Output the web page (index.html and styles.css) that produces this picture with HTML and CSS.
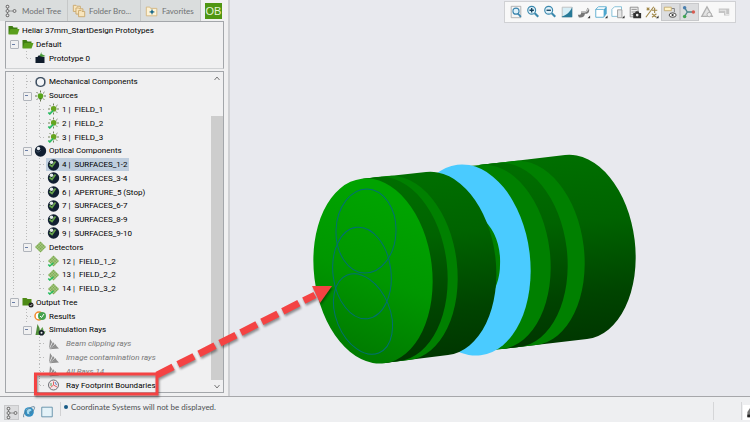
FILE: index.html
```
<!DOCTYPE html>
<html lang="en">
<head>
  <meta charset="UTF-8">
  <meta name="viewport" content="width=device-width, initial-scale=1">
  <title>Heliar 37mm_StartDesign Prototypes</title>
  <link rel="stylesheet" href="styles.css">
</head>
<body>
  <svg class="defs" aria-hidden="true">
    <symbol id="folder" viewBox="0 0 12 12"><path d="M1 10V2h4l1 1.500h4V5" fill="#3f7d12"/><path d="M1 10.500 3 5h9l-2 5.500z" fill="#5a9e1c"/></symbol>
    <symbol id="folder-dark" viewBox="0 0 12 12"><path d="M1 9.500V2h4l1 1h4v6.500z" fill="#4d8a16"/><circle cx="9.500" cy="9" r="2.500" fill="#222"/><path d="m8.300 9 1 1 1.400-2" stroke="#ddd" fill="none" stroke-width=".7"/></symbol>
    <symbol id="proto" viewBox="0 0 12 12"><path d="M1 11V5h2l1-1.500h3L8 5h2v6z" fill="#101c2c"/><path d="M5 4 7 0v2l4 2-3 1z" fill="#4a9a3a"/></symbol>
    <symbol id="ring" viewBox="0 0 12 12"><rect x="1.500" y="2" width="9" height="8" rx="2" fill="#e4e8ec" stroke="#8a939e"/><circle cx="6" cy="6" r="4.300" fill="#f4f5f7" stroke="#36475a" stroke-width="1.300"/></symbol>
    <symbol id="sun" viewBox="0 0 12 12"><path d="M6 .500v11M.500 6h11M2 2l8 8M10 2l-8 8" stroke="#55663c" stroke-width=".9" stroke-dasharray="2 7 2"/><circle cx="6" cy="6" r="2.800" fill="#58a51a"/><path d="M4.800 8h2.400v1.500H4.800z" fill="#3f7d12"/></symbol>
    <symbol id="source" viewBox="0 0 12 12"><path d="M6 .500v11M.500 6h11M2 2l8 8M10 2l-8 8" stroke="#65764c" stroke-width=".9" stroke-dasharray="2 7 2"/><circle cx="6.200" cy="5.800" r="2.800" fill="#66a31e"/><path d="m.800 9.500 1.500 1.500 3.500-3.500" stroke="#24bd60" fill="none" stroke-width="1.600"/></symbol>
    <symbol id="ball" viewBox="0 0 12 12"><circle cx="6" cy="6" r="5.700" fill="#111f31"/><circle cx="4" cy="3.500" r="1.700" fill="#e8edf2"/><path d="M1.500 5.500c1 2 3 2 5-.500" stroke="#53647a" fill="none" stroke-width=".8"/></symbol>
    <symbol id="lens" viewBox="0 0 12 12"><circle cx="6" cy="6" r="5.700" fill="#111f31"/><circle cx="4" cy="3.300" r="1.800" fill="#e2e9e6"/><path d="m2 5.500 2.500 2 3.500-5" stroke="#66a34a" fill="none" stroke-width="1.700"/></symbol>
    <symbol id="detector" viewBox="0 0 12 12"><path d="m6 .500 5.500 5.500L6 11.500.500 6z" fill="#7cab50"/><path d="m3 3 6 6M4.500 1.700l6 6M1.500 4.700l6 6M9 3 3 9M7.500 1.700l-6 6M10.500 4.700l-6 6" stroke="#c8dcae" stroke-width=".5"/></symbol>
    <symbol id="detector-on" viewBox="0 0 12 12"><use href="#detector"/><path d="m.800 9.500 1.500 1.500 3.500-3" stroke="#24bd60" fill="none" stroke-width="1.600"/></symbol>
    <symbol id="results" viewBox="0 0 12 12"><circle cx="4.500" cy="6" r="4" fill="#fff" stroke="#f18a2a" stroke-width="1.500"/><circle cx="7.500" cy="6" r="4" fill="#45a34f"/><path d="m5.500 6 1.500 1.500L9.500 4" stroke="#fff" fill="none"/></symbol>
    <symbol id="simrays" viewBox="0 0 12 12"><path d="M1 11 3 0l2 4 1 7z" fill="#4f8d3a"/><path d="M2 11 8 3l1 3zM2 11l9-4-1 3z" fill="#5f9d4a"/><circle cx="7" cy="8.800" r="2.800" fill="#17202a"/><circle cx="7" cy="8.800" r="1" fill="#eee"/></symbol>
    <symbol id="rays" viewBox="0 0 12 12"><path d="M1.500 11 2.500 1l2 3zM2 11l3.500-7 1.500 2zM2 11l6-5 1 2zM2 11.300 9 8l2.500 2.500z" fill="#8c8c8c"/></symbol>
    <symbol id="footprint" viewBox="0 0 12 12"><circle cx="6" cy="6" r="5" fill="#f3e6e9" stroke="#6b7075"/><path d="M6 2.500V6L3 8.500M6 6l3.500 2" stroke="#e06464" fill="none"/><path d="M3.500 4v3" stroke="#58a767"/><path d="m7.500 3 1.500 3" stroke="#5b86cc"/></symbol>
    <symbol id="nodes" viewBox="0 0 16 16"><path d="M4 3v10M4 8h8" stroke="#8a8a8a" fill="none"/><g fill="#f2f2f2" stroke="#555"><rect x="2.500" y="1.500" width="3" height="3" rx="1"/><rect x="2.500" y="6.500" width="3" height="3" rx="1"/><rect x="2.500" y="11.500" width="3" height="3" rx="1"/><rect x="10.500" y="6.500" width="3" height="3" rx="1"/></g></symbol>
  </svg>

  <div class="app">
    <main class="workspace">
      <aside class="sidebar">
        <nav class="tabs">
          <button class="tab tab-model"><svg viewBox="0 0 16 16"><use href="#nodes"/></svg>Model Tree</button>
          <button class="tab tab-folder"><svg viewBox="0 0 16 16"><g fill="#f8e5bd" stroke="#c8a568"><path d="M1.500 8.500v-7h3l1 1h4v6z"/><path d="M4.500 11.500v-7h3l1 1h4v6z"/><path d="M7.500 14.500v-7h3l1 1h3v6z"/></g></svg>Folder Bro...</button>
          <button class="tab tab-fav"><svg viewBox="0 0 16 16"><path d="M1.500 13.500v-10h4l1 1.500h7v8.500z" fill="#fdf2d5" stroke="#d3b57c"/><path d="m8 5.500 1 2.500 2.500 1L9 10l-1 2.500L7 10 4.500 9 7 8z" fill="#16688a"/></svg>Favorites</button>
          <button class="tab tab-ob" aria-label="OB"><span>OB</span></button>
        </nav>

        <ul class="tree prototypes">
          <li class="row"><svg class="icon"><use href="#folder"/></svg><span>Heliar 37mm_StartDesign Prototypes</span></li>
          <li class="row"><button class="toggle" aria-label="Collapse"></button><svg class="icon"><use href="#folder"/></svg><span>Default</span></li>
          <li class="row"><i></i><i class="branch last"></i><svg class="icon"><use href="#proto"/></svg><span>Prototype 0</span></li>
        </ul>

        <div class="components">
          <ul class="tree">
            <li class="row"><i class="line"></i><i class="branch"></i><svg class="icon"><use href="#ring"/></svg><span>Mechanical Components</span></li>
            <li class="row"><i class="line"></i><button class="toggle" aria-label="Collapse"></button><svg class="icon"><use href="#sun"/></svg><span>Sources</span></li>
            <li class="row"><i class="line"></i><i class="line"></i><i class="branch"></i><svg class="icon"><use href="#source"/></svg><span>1 |&nbsp; FIELD_1</span></li>
            <li class="row"><i class="line"></i><i class="line"></i><i class="branch"></i><svg class="icon"><use href="#source"/></svg><span>2 |&nbsp; FIELD_2</span></li>
            <li class="row"><i class="line"></i><i class="line"></i><i class="branch last"></i><svg class="icon"><use href="#source"/></svg><span>3 |&nbsp; FIELD_3</span></li>
            <li class="row"><i class="line"></i><button class="toggle" aria-label="Collapse"></button><svg class="icon"><use href="#ball"/></svg><span>Optical Components</span></li>
            <li class="row"><i class="line"></i><i class="line"></i><i class="branch"></i><span class="selected"><svg class="icon"><use href="#lens"/></svg>4 |&nbsp; SURFACES_1-2</span></li>
            <li class="row"><i class="line"></i><i class="line"></i><i class="branch"></i><svg class="icon"><use href="#lens"/></svg><span>5 |&nbsp; SURFACES_3-4</span></li>
            <li class="row"><i class="line"></i><i class="line"></i><i class="branch"></i><svg class="icon"><use href="#lens"/></svg><span>6 |&nbsp; APERTURE_5 (Stop)</span></li>
            <li class="row"><i class="line"></i><i class="line"></i><i class="branch"></i><svg class="icon"><use href="#lens"/></svg><span>7 |&nbsp; SURFACES_6-7</span></li>
            <li class="row"><i class="line"></i><i class="line"></i><i class="branch"></i><svg class="icon"><use href="#lens"/></svg><span>8 |&nbsp; SURFACES_8-9</span></li>
            <li class="row"><i class="line"></i><i class="line"></i><i class="branch last"></i><svg class="icon"><use href="#lens"/></svg><span>9 |&nbsp; SURFACES_9-10</span></li>
            <li class="row"><i class="line"></i><button class="toggle" aria-label="Collapse"></button><svg class="icon"><use href="#detector"/></svg><span>Detectors</span></li>
            <li class="row"><i class="line"></i><i></i><i class="branch"></i><svg class="icon"><use href="#detector-on"/></svg><span>12 |&nbsp; FIELD_1_2</span></li>
            <li class="row"><i class="line"></i><i></i><i class="branch"></i><svg class="icon"><use href="#detector-on"/></svg><span>13 |&nbsp; FIELD_2_2</span></li>
            <li class="row"><i class="line"></i><i></i><i class="branch last"></i><svg class="icon"><use href="#detector-on"/></svg><span>14 |&nbsp; FIELD_3_2</span></li>
            <li class="row"><button class="toggle" aria-label="Collapse"></button><svg class="icon"><use href="#folder-dark"/></svg><span>Output Tree</span></li>
            <li class="row"><i></i><i class="branch"></i><svg class="icon"><use href="#results"/></svg><span>Results</span></li>
            <li class="row"><i></i><button class="toggle" aria-label="Collapse"></button><svg class="icon"><use href="#simrays"/></svg><span>Simulation Rays</span></li>
            <li class="row hidden-rays"><i></i><i></i><i class="branch"></i><svg class="icon"><use href="#rays"/></svg><span>Beam clipping rays</span></li>
            <li class="row hidden-rays"><i></i><i></i><i class="branch"></i><svg class="icon"><use href="#rays"/></svg><span>Image contamination rays</span></li>
            <li class="row hidden-rays"><i></i><i></i><i class="branch"></i><svg class="icon"><use href="#rays"/></svg><span>All Rays 14</span></li>
            <li class="row footprint"><i></i><i></i><i class="branch last"></i><svg class="icon"><use href="#footprint"/></svg><span>Ray Footprint Boundaries</span></li>
          </ul>
          <div class="scrollbar">
            <svg viewBox="0 0 12 12"><path d="m3.500 8 2.500-3L8.500 8" fill="none" stroke="#777"/></svg>
            <div class="thumb"></div>
            <svg viewBox="0 0 12 12"><path d="m3.500 5 2.500 3L8.500 5" fill="none" stroke="#777"/></svg>
          </div>
        </div>
      </aside>

      <section class="canvas">
        <div class="toolbar">
          <button aria-label="Refit"><svg viewBox="0 0 16 16"><path d="M2.500 1.500h11v13h-11z" fill="#f5f5f5" stroke="#aaa"/><circle cx="8" cy="7" r="3.500" fill="#dff1fa" stroke="#3a85ae" stroke-width="1.300"/><path d="m10.500 10 3 3.500" stroke="#3a85ae" stroke-width="2"/></svg></button>
          <button aria-label="Zoom in"><svg viewBox="0 0 16 16"><circle cx="6.500" cy="6" r="4.500" fill="#dff1fa" stroke="#3b88ad" stroke-width="1.300"/><path d="m10 9.500 4 4" stroke="#3b88ad" stroke-width="2.500"/><path d="M4 6h5M6.500 3.500v5" stroke="#123f5b" stroke-width="1.500"/></svg></button>
          <button aria-label="Zoom out"><svg viewBox="0 0 16 16"><circle cx="6.500" cy="6" r="4.500" fill="#dff1fa" stroke="#3b88ad" stroke-width="1.300"/><path d="m10 9.500 4 4" stroke="#3b88ad" stroke-width="2.500"/><path d="M4 6h5" stroke="#123f5b" stroke-width="1.500"/></svg></button>
          <button aria-label="Repaint"><svg viewBox="0 0 16 16"><path d="M2.500 2.500h11v11h-11z" fill="#d7eef6" stroke="#bbb"/><path d="M14 2C12 8 7 12 2 13v1h12z" fill="#287997"/></svg></button>
          <button aria-label="Shading"><svg viewBox="0 0 16 16"><path d="M1 11c3 1 4-1 4-4h4c2 0 2-2 3-4l2 2c0 4-2 5-5 5 0 3-3 5-7 4z" fill="#777"/><path d="M5 8h4c2 0 3-2 4-4" stroke="#ccc" fill="none" stroke-width="1.500"/><path d="M15 12v3h-3z" fill="#333"/></svg></button>
          <button aria-label="Saved views"><svg viewBox="0 0 16 16"><path d="m2 5 3-3h9v8l-3 4H2z" fill="#fff" stroke="#54a8cd"/><path d="M11 5v9l3-4V2z" fill="#4ca6ce"/><path d="M2 5h9" stroke="#54a8cd"/><path d="M15.500 12v3h-3z" fill="#333"/></svg></button>
          <button aria-label="View manager"><svg viewBox="0 0 16 16"><path d="m1 5 3-3h8v7l-3 4H1z" fill="#fff" stroke="#78b9d4"/><path d="M7.500 5.500h5v9h-5z" fill="#e6e6e6" stroke="#999"/><path d="M15.500 12v3h-3z" fill="#333"/></svg></button>
          <button aria-label="Snapshot"><svg viewBox="0 0 16 16"><path d="M2.500 2.500h9v11h-9z" fill="#eee" stroke="#888"/><path d="M4 5h6M4 8h6M4 11h6" stroke="#888"/><path d="M6 9h2l1-2h3l1 2h2v6H6z" fill="#333"/><circle cx="10.500" cy="11.500" r="1.500" fill="#eee"/></svg></button>
          <button aria-label="Datum display"><svg viewBox="0 0 16 16"><path d="m1 14 9-12M2 3l3 3M5 3 2 6M8 6h6M11 3v6M8 10l5 4M13 10l-5 4" stroke="#a18849" stroke-width="1.300"/><path d="M15.500 12v3h-3z" fill="#333"/></svg></button>
          <button class="pressed" aria-label="Annotations"><svg viewBox="0 0 16 16"><path d="M1.500 2.500h8v4h-8z" fill="#fff4c9" stroke="#c5ac70"/><path d="M10 4h3v4" stroke="#777" fill="none"/><ellipse cx="11" cy="11.500" rx="4" ry="2.500" fill="#fff" stroke="#333"/><circle cx="11" cy="11.500" r="1.300" fill="#333"/></svg></button>
          <button class="pressed" aria-label="Spin center"><svg viewBox="0 0 16 16"><path d="m3 3 3 5-3 5M6 8h7" stroke="#4c8589" fill="none" stroke-width="1.500"/><circle cx="3" cy="3" r="2" fill="#4a7faf"/><circle cx="3" cy="13" r="2" fill="#42a451"/><circle cx="13" cy="8" r="2" fill="#d75b50"/></svg></button>
          <button aria-label="Simulate"><svg viewBox="0 0 16 16"><path d="M8 2 2 13h12z" fill="#e3e3e3" stroke="#b0b0b0" stroke-width="1.500"/><circle cx="10.500" cy="11" r="2.500" fill="#eee" stroke="#aaa"/></svg></button>
          <button aria-label="Stop"><svg viewBox="0 0 16 16"><path d="M2 4h12v8H8V9H2z" fill="#c5c5c5"/><path d="M3 6h7v5h4" stroke="#eee" fill="none"/></svg></button>
        </div>

        <svg class="model" width="440" height="230" viewBox="290 140 440 230">
          <defs>
            <linearGradient id="barrel" gradientUnits="userSpaceOnUse" x1="480" y1="165" x2="498" y2="350">
              <stop offset="0" stop-color="#006f00"/><stop offset=".35" stop-color="#006300"/><stop offset=".75" stop-color="#004400"/><stop offset="1" stop-color="#003700"/>
            </linearGradient>
            <linearGradient id="face" gradientUnits="userSpaceOnUse" x1="410" y1="210" x2="340" y2="345">
              <stop offset="0" stop-color="#00a300"/><stop offset=".5" stop-color="#009700"/><stop offset="1" stop-color="#007c00"/>
            </linearGradient>
          </defs>
          <!-- rear group -->
          <path d="M479 165 565 155A58 91 -7 0 1 587 339L501 349z" fill="url(#barrel)"/>
          <path d="M479 165 514 161A58 91 -7 0 1 536 345L501 349z" fill="#008000"/>
          <path d="M479 165 497 163A58 91 -7 0 1 519 347L501 349z" fill="url(#barrel)"/>
          <path d="M459 167 480 165A58 91 -7 0 1 502 349L481 352z" fill="#008000"/>
          <!-- aperture -->
          <ellipse cx="469" cy="260" rx="61" ry="96" transform="rotate(-7 469 260)" fill="#4acbff"/>
          <!-- front group -->
          <path d="M480 216C494 228 501 244 500 265c0 11-3 19-7 29z" fill="#008000"/>
          <path d="M362 179 426 172A58 91 -7 0 1 448 355L384 363z" fill="url(#barrel)"/>
          <path d="M362 179 387 176A58 91 -7 0 1 409 360L384 363z" fill="#008000"/>
          <path d="M362 179 377 177A58 91 -7 0 1 399 361L384 363z" fill="url(#barrel)"/>
          <ellipse cx="373" cy="271" rx="59" ry="93" transform="rotate(-7 373 271)" fill="url(#face)"/>
          <g fill="none" stroke="#006f73">
            <ellipse cx="366" cy="231" rx="30" ry="42" transform="rotate(2 366 231)"/>
            <ellipse cx="362" cy="273" rx="29" ry="46" transform="rotate(-7 362 273)"/>
            <ellipse cx="363" cy="314" rx="27" ry="42" transform="rotate(-22 363 314)"/>
          </g>
        </svg>
      </section>
    </main>

    <footer class="statusbar">
      <button class="pressed" aria-label="Show tree"><svg viewBox="0 0 16 16"><use href="#nodes"/></svg></button>
      <button aria-label="Browser"><svg viewBox="0 0 16 16"><circle cx="8" cy="8" r="5.500" fill="#318fc4"/><path d="M5 5c2-2 5-1 6 1L8 8l1 3-3-1z" fill="#a7dbef"/><path d="M2 14C0 10 9 1 14 2c2 2-4 8-8 10" fill="none" stroke="#527a94"/></svg></button>
      <button aria-label="Full screen"><svg viewBox="0 0 16 16"><path d="M2 2.500h12v11H2z" fill="#e4f2f8" stroke="#5c8ba5"/></svg></button>
      <p class="message"><b></b>Coordinate Systems will not be displayed.</p>
      <div class="slot"></div>
      <button class="find" aria-label="Find"><svg viewBox="0 0 16 16"><path d="M5 14V8l4-6h5v12z" fill="#777"/><path d="M5 11h9v3H5z" fill="#222"/></svg></button>
    </footer>

    <svg class="callout" width="340" height="130" viewBox="0 270 340 130" aria-hidden="true">
      <g class="callout-shape">
        <rect x="35.500" y="374" width="121.500" height="20" fill="none" stroke="#f44343" stroke-width="3"/>
        <path d="M157 375 315 295" stroke="#f44343" stroke-width="7" stroke-dasharray="18 5.500"/>
        <path d="M312 286 332 286 320 303z" fill="#f44343"/>
      </g>
    </svg>
  </div>
</body>
</html>
```
FILE: styles.css
```
* {
  box-sizing: border-box;
}
body {
  margin: 0;
  background: #e8e9ee;
  color: #000;
  font-family: Roboto, Arial, sans-serif;
  font-size: 8px;
}
button {
  border: 0;
  padding: 0;
  background: none;
  font: inherit;
  color: inherit;
}
svg {
  display: block;
  flex: none;
}
.defs {
  display: none;
}
.app {
  position: relative;
  display: flex;
  flex-direction: column;
  min-height: 100vh;
}
.workspace {
  flex: 1;
  display: flex;
}

/* left side */
.sidebar {
  display: flex;
  flex-direction: column;
  width: 230px;
  padding: 0 4px 3px 5px;
  background: #f0f0f1;
  border-right: 2px solid #cfd0d3;
}
.tabs {
  display: flex;
  height: 21px;
  margin: 0 -4px 0 -5px;
  background: #dadddd;
  font-family: Lato, "Open Sans", sans-serif;
  color: #6f7172;
}
.tab {
  display: flex;
  align-items: center;
  gap: 5px;
  border-right: 1px solid #c6c8c8;
  white-space: nowrap;
}
.tab svg {
  width: 14px;
  height: 14px;
}
.tab-model {
  width: 68px;
  padding-left: 4px;
  gap: 4px;
}
.tab-folder {
  width: 73px;
  padding-left: 4px;
  gap: 3px;
}
.tab-fav {
  width: 60px;
  padding-left: 4px;
  gap: 3px;
}
.tab-ob {
  flex: 1;
  padding-left: 4px;
  background: #f0f0f1;
  border-right: 0;
}
.tab-ob span {
  width: 17px;
  font-family: "Liberation Sans", Arial, sans-serif;
  font-size: 11px;
  line-height: 16px;
  background: #4f9612;
  color: #e6f2d8;
}
.tree {
  margin: 0;
  padding: 0;
  list-style: none;
}
.prototypes {
  height: 48px;
  padding: 1px;
  border: 1px solid #a3a6aa;
  border-bottom-color: #d0d2d4;
}
.prototypes .row {
  height: 14px;
}
.components {
  flex: 1;
  display: flex;
  margin-top: 2px;
  border: 1px solid #a3a6aa;
}
.components .tree {
  flex: 1;
  display: grid;
  grid-auto-rows: 1fr;
  padding: 3px 0 0 1px;
}
.row {
  display: flex;
  align-items: center;
  min-height: 13px;
  white-space: nowrap;
}
.row i,
.toggle {
  flex: none;
  align-self: stretch;
  position: relative;
  width: 13px;
}
.line {
  background: repeating-linear-gradient(#bbb 0 1px, transparent 1px 3px) 6px 0 / 1px 100% no-repeat;
}
.branch {
  background:
    repeating-linear-gradient(#bbb 0 1px, transparent 1px 3px) 6px 0 / 1px 100% no-repeat,
    repeating-linear-gradient(90deg, #bbb 0 1px, transparent 1px 3px) 7px 50% / 6px 1px no-repeat;
}
.branch.last {
  background-size: 1px 50%, 6px 1px;
}
.toggle {
  background: linear-gradient(#6b7fa8, #6b7fa8) 5px 50% / 3px 1px no-repeat;
}
.toggle::before {
  content: "";
  position: absolute;
  top: 50%;
  left: 3px;
  width: 7px;
  height: 7px;
  margin-top: -4px;
  border: 1px solid #b0b4bb;
  border-radius: 1px;
}
.icon {
  width: 13px;
  height: 12px;
  margin: 0 2px 0 1px;
}
.prototypes .row:first-child .icon {
  margin-left: 0;
}
.selected {
  display: flex;
  align-items: center;
  align-self: stretch;
  padding-right: 1px;
  background: #bfcede;
}
.hidden-rays {
  font-style: italic;
  color: #777;
}
.hidden-rays .icon,
.footprint .icon {
  margin-right: 6px;
}
.scrollbar {
  display: flex;
  flex-direction: column;
  width: 12px;
}
.scrollbar svg {
  width: 12px;
  height: 12px;
}
.thumb {
  flex: 1;
  margin-top: 32px;
  background: #cdcdcd;
}

/* graphics area */
.canvas {
  flex: 1;
  display: flex;
  flex-direction: column;
  min-width: 0;
}
.toolbar {
  display: flex;
  align-self: flex-end;
  width: 232px;
  height: 22px;
  margin: 1px 14px 0 0;
  padding: 1px 2px;
  background: #f8f8f8;
  border: 1px solid #d0d1d4;
}
.toolbar button {
  flex: 1;
  display: flex;
  align-items: center;
  justify-content: center;
}
.toolbar svg {
  width: 14px;
  height: 14px;
}
.toolbar .pressed,
.statusbar .pressed {
  background: #dcdddf;
  border: 1px solid #c8c9cb;
}
.model {
  margin: 117px 0 0 60px;
}

/* bottom line */
.statusbar {
  display: flex;
  align-items: center;
  height: 26px;
  padding: 5px 0 0 4px;
  gap: 3px;
  background: #eeeff1;
  border-top: 1px solid #a6a7aa;
  font-family: Lato, "Open Sans", sans-serif;
}
.statusbar button {
  width: 15px;
  height: 15px;
}
.statusbar svg {
  width: 14px;
  height: 14px;
}
.message {
  flex: 1;
  align-self: flex-start;
  display: flex;
  align-items: center;
  gap: 3px;
  height: 14px;
  margin: 0 0 0 2px;
  padding: 0 0 4px 3px;
  border-left: 1px solid #d0d1d3;
  color: #4d4f51;
}
.message b {
  width: 4px;
  height: 4px;
  border-radius: 50%;
  background: #165a86;
}
.slot {
  align-self: flex-start;
  width: 29px;
  height: 18px;
  border: solid #d5d6d8;
  border-width: 0 1px;
}
.statusbar .find {
  width: 7px;
  margin-left: -2px;
  background: #fff;
  overflow: hidden;
}

/* red marker over the tree and the model */
.callout {
  position: absolute;
  top: 270px;
  left: 0;
  pointer-events: none;
}
.callout-shape {
  filter: drop-shadow(1px 2px 1px rgba(0, 0, 0, 0.4));
}
```
